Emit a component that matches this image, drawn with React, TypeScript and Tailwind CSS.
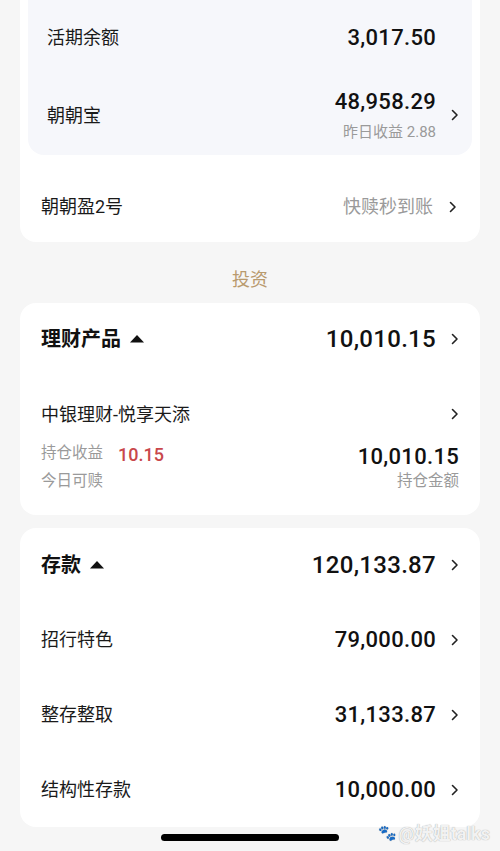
import React from 'react'

const font = { fontFamily: 'Roboto, "Noto Sans CJK SC", sans-serif' }

function Chevron({ className = '' }: { className?: string }) {
  return (
    <svg width="8" height="12" viewBox="0 0 8 12" className={className}>
      <path d="M1.5 1.5 L6 6 L1.5 10.5" fill="none" stroke="#222" strokeWidth="1.6" strokeLinecap="round" strokeLinejoin="round" />
    </svg>
  )
}

function Caret() {
  return (
    <svg width="14" height="8" viewBox="0 0 14 8" className="ml-[9px]">
      <path d="M7 0 L14 7.5 L0 7.5 Z" fill="#111" />
    </svg>
  )
}

function DepositRow({ name, amount }: { name: string; amount: string }) {
  return (
    <div className="flex h-[75px] items-center justify-between">
      <span className="text-[18px] text-[#1a1a1a]">{name}</span>
      <div className="flex items-center">
        <span className="text-[22px] font-medium tracking-[0.3px] text-[#111]">{amount}</span>
        <div className="flex w-[23px] justify-end">
          <Chevron />
        </div>
      </div>
    </div>
  )
}

export default function App() {
  return (
    <div className="relative min-h-[851px] overflow-hidden bg-[#f6f6f6]" style={font}>
      {/* 活期 card */}
      <div className="mx-[20px] rounded-b-2xl bg-white px-[8px]">
        <div className="rounded-b-2xl bg-[#f6f7fb] pl-[19px] pr-[13px]">
          <div className="flex h-[75px] items-center justify-between">
            <span className="text-[18px] text-[#1a1a1a]">活期余额</span>
            <div className="flex items-center">
              <span className="text-[22px] font-medium tracking-[0.3px] text-[#111]">3,017.50</span>
              <div className="w-[23px]" />
            </div>
          </div>
          <div className="flex h-[80px] items-center justify-between">
            <span className="text-[18px] text-[#1a1a1a]">朝朝宝</span>
            <div className="flex items-center">
              <div className="flex flex-col items-end">
                <span className="h-[28px] text-[22px] font-medium leading-[28px] tracking-[0.3px] text-[#111]">48,958.29</span>
                <span className="mt-[6px] h-[20px] text-[15px] leading-[20px] text-[#9a9a9a]">昨日收益 2.88</span>
              </div>
              <div className="flex w-[23px] justify-end">
                <Chevron />
              </div>
            </div>
          </div>
        </div>
        <div className="flex items-center justify-between pb-[21px] pl-[13px] pr-[15px] pt-[38px]">
          <span className="text-[18px] leading-[28px] text-[#1a1a1a]">朝朝盈2号</span>
          <div className="flex items-center">
            <span className="text-[18px] leading-[28px] text-[#9a9a9a]">快赎秒到账</span>
            <div className="flex w-[24px] justify-end">
              <Chevron />
            </div>
          </div>
        </div>
      </div>

      {/* section title */}
      <div className="pb-[12px] pt-[27px] text-center text-[18px] leading-[22px] text-[#b99a6e]">投资</div>

      {/* 理财产品 card */}
      <div className="mx-[20px] rounded-2xl bg-white px-[21px] pb-[22px]">
        <div className="flex h-[72px] items-center justify-between">
          <div className="flex items-center">
            <span className="text-[20px] font-bold text-[#111]">理财产品</span>
            <Caret />
          </div>
          <div className="flex items-center">
            <span className="text-[24px] font-medium tracking-[0.3px] text-[#111]">10,010.15</span>
            <div className="flex w-[23px] justify-end">
              <Chevron />
            </div>
          </div>
        </div>
        <div className="mt-[26px] flex h-[26px] items-center justify-between">
          <span className="text-[18px] text-[#1a1a1a]">中银理财-悦享天添</span>
          <Chevron />
        </div>
        <div className="mt-[13px] flex h-[28px] items-center justify-between">
          <div className="flex items-center">
            <span className="text-[15.5px] text-[#9a9a9a]">持仓收益</span>
            <span className="ml-[15px] text-[18px] font-medium text-[#c9474b]">10.15</span>
          </div>
          <span className="mt-[4px] text-[22px] font-medium tracking-[0.3px] text-[#111]">10,010.15</span>
        </div>
        <div className="mt-[3px] flex h-[22px] items-center justify-between">
          <span className="text-[15.5px] text-[#9a9a9a]">今日可赎</span>
          <span className="text-[15.5px] text-[#9a9a9a]">持仓金额</span>
        </div>
      </div>

      {/* 存款 card */}
      <div className="mx-[20px] mt-[13px] rounded-2xl bg-white px-[21px]">
        <div className="flex h-[74px] items-center justify-between">
          <div className="flex items-center">
            <span className="text-[20px] font-bold text-[#111]">存款</span>
            <Caret />
          </div>
          <div className="flex items-center">
            <span className="text-[24px] font-medium tracking-[0.3px] text-[#111]">120,133.87</span>
            <div className="flex w-[23px] justify-end">
              <Chevron />
            </div>
          </div>
        </div>
        <DepositRow name="招行特色" amount="79,000.00" />
        <DepositRow name="整存整取" amount="31,133.87" />
        <DepositRow name="结构性存款" amount="10,000.00" />
      </div>

      {/* home indicator */}
      <div className="mx-auto mt-[7px] h-[7px] w-[178px] rounded-full bg-black" />

      {/* watermark */}
      <div className="absolute bottom-[4px] right-[10px] flex items-center text-[18px] font-bold text-[#f2f2f2] [text-shadow:0_0_1px_#999]">
        <span className="mr-[2px] text-[15px]">🐾</span>
        <span>@妖姐talks</span>
      </div>
    </div>
  )
}
